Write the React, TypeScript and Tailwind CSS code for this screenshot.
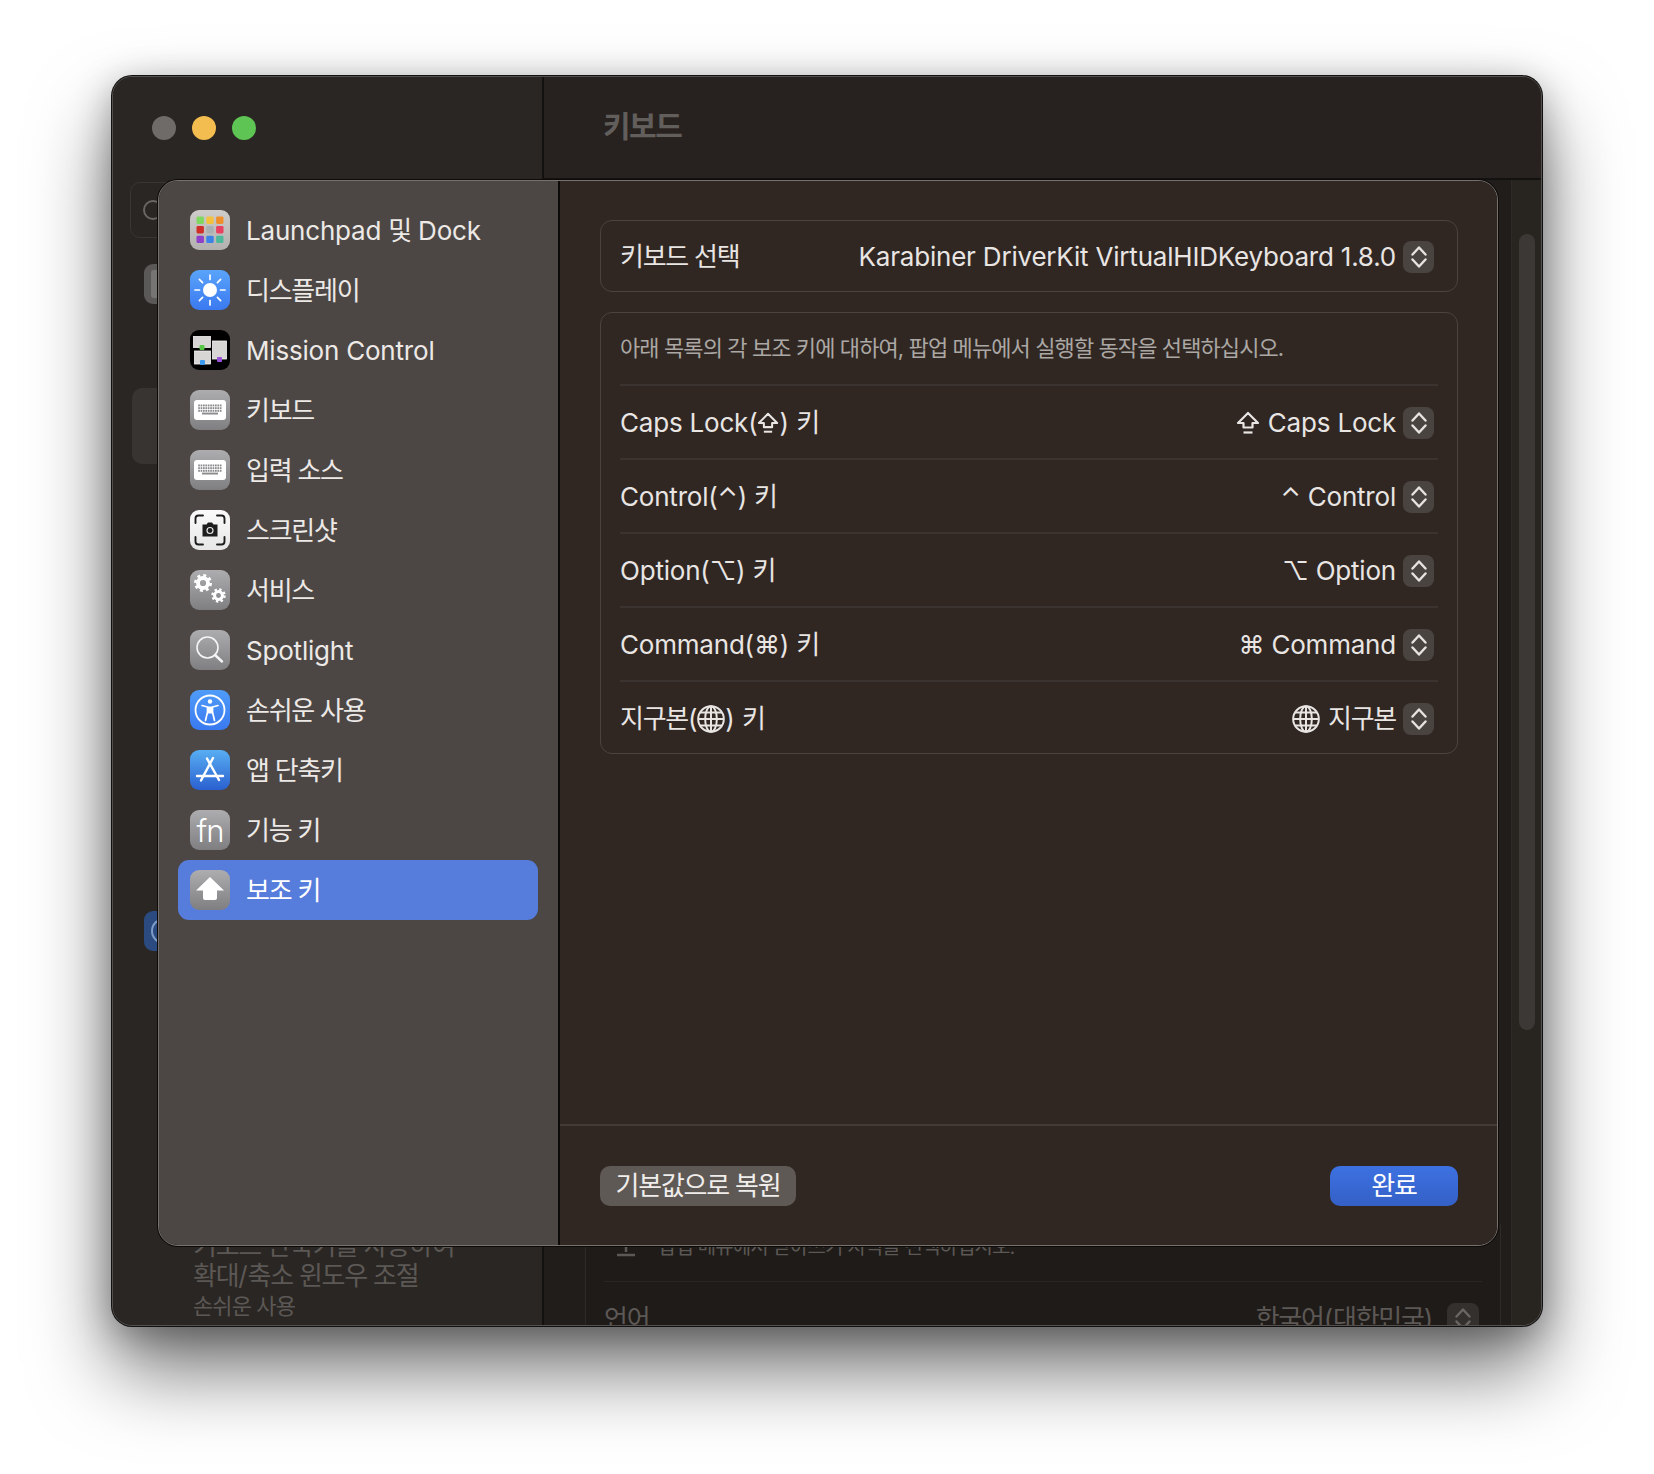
import React from "react";

function T({ children }: { children: string }) {
  const parts = children.split(/([\uAC00-\uD7A3]+(?:\s+[\uAC00-\uD7A3]+)*)/).filter(Boolean);
  return (
    <>
      {parts.map((p, i) =>
        /[\uAC00-\uD7A3]/.test(p) ? (
          <span key={i} className="tracking-[-1.25px]">{p}</span>
        ) : (
          <span key={i} className="tracking-[-0.2px]">{p}</span>
        )
      )}
    </>
  );
}

function Tile({ id, from, to, children, radius = 9 }: { id: string; from: string; to: string; children?: React.ReactNode; radius?: number }) {
  return (
    <svg width="40" height="40" viewBox="0 0 40 40" className="shrink-0">
      <defs>
        <linearGradient id={id} x1="0" y1="0" x2="0" y2="1">
          <stop offset="0" stopColor={from} />
          <stop offset="1" stopColor={to} />
        </linearGradient>
      </defs>
      <rect x="0" y="0" width="40" height="40" rx={radius} fill={`url(#${id})`} />
      {children}
    </svg>
  );
}

const GRAY: [string, string] = ["#adacae", "#7f7e81"];

function LaunchpadIcon() {
  const c = [
    ["#7fd860", "#f2c23e", "#ee8f2c"],
    ["#cf2f26", "#a9b0b2", "#e8405e"],
    ["#8f3fc8", "#3b82e8", "#4fb89a"],
  ];
  return (
    <Tile id="lp" from="#cfcdcb" to="#b3b1af">
      {c.map((r, y) =>
        r.map((f, x) => <rect key={`${x}${y}`} x={6.5 + x * 9.8} y={6.5 + y * 9.6} width="7.4" height="7.4" rx="1.4" fill={f} />)
      )}
    </Tile>
  );
}

function DisplayIcon() {
  const rays = [0, 45, 90, 135, 180, 225, 270, 315];
  return (
    <Tile id="dp" from="#5aa4fb" to="#3a79f0">
      <circle cx="20" cy="20" r="7" fill="#fff" />
      {rays.map((a) => (
        <line key={a} x1="20" y1="5" x2="20" y2="9.5" stroke="#fff" strokeWidth="1.7" strokeLinecap="round" transform={`rotate(${a} 20 20)`} />
      ))}
    </Tile>
  );
}

function MissionIcon() {
  return (
    <Tile id="mc" from="#000" to="#000">
      <rect x="3.5" y="6.5" width="17" height="11" fill="#d8d6d4" stroke="#f4f4f4" strokeWidth="0.8" />
      <rect x="4.5" y="21" width="16" height="13" fill="#d8d6d4" stroke="#f4f4f4" strokeWidth="0.8" />
      <rect x="22.5" y="11" width="14" height="18" fill="#d8d6d4" stroke="#f4f4f4" strokeWidth="0.8" />
      <rect x="9.5" y="15" width="5" height="5" rx="1" fill="#58c848" />
      <rect x="10" y="30" width="5" height="5" rx="1" fill="#3d9bf0" />
      <rect x="27" y="27" width="5" height="5" rx="1" fill="#9a50d8" />
    </Tile>
  );
}

function KeyboardIcon({ id }: { id: string }) {
  const dots: React.ReactNode[] = [];
  for (let y = 0; y < 3; y++)
    for (let x = 0; x < 10; x++)
      dots.push(<rect key={`${x}-${y}`} x={8.2 + x * 2.4} y={14.5 + y * 2.7} width="1.7" height="1.9" fill="#8c8b8d" />);
  return (
    <Tile id={id} from={GRAY[0]} to={GRAY[1]}>
      <rect x="4" y="10" width="32" height="20" rx="3" fill="#fff" />
      {dots}
      <rect x="12" y="22.600" width="16" height="1.900" fill="#8c8b8d" />
    </Tile>
  );
}

function ScreenshotIcon() {
  return (
    <Tile id="ss" from="#fbfbfb" to="#e6e6e6">
      <g fill="none" stroke="#1d1d1d" strokeWidth="1.9" strokeLinecap="round">
        <path d="M5.5 13V8.5a3 3 0 0 1 3-3H13" />
        <path d="M27 5.5h4.5a3 3 0 0 1 3 3V13" />
        <path d="M5.5 27v4.5a3 3 0 0 0 3 3H13" />
        <path d="M27 34.5h4.5a3 3 0 0 0 3-3V27" />
      </g>
      <path d="M12.500 14.500h4l1.500-2h4l1.500 2h4v12h-15z" fill="#1d1d1d" />
      <circle cx="20" cy="20.500" r="3.600" fill="#e8e8e8" />
      <circle cx="20" cy="20.500" r="2.400" fill="#1d1d1d" />
    </Tile>
  );
}

function Gear({ cx, cy, r, w }: { cx: number; cy: number; r: number; w: number }) {
  const c = 2 * Math.PI * r;
  return (
    <g>
      <circle cx={cx} cy={cy} r={r} fill="none" stroke="#fff" strokeWidth={w} strokeDasharray={`${c / 16} ${c / 16}`} />
      <circle cx={cx} cy={cy} r={r * 0.66} fill="none" stroke="#fff" strokeWidth={r * 0.5} />
    </g>
  );
}

function ServicesIcon() {
  return (
    <Tile id="sv" from={GRAY[0]} to={GRAY[1]}>
      <Gear cx={13} cy={13} r={7.600} w={2.800} />
      <Gear cx={28.500} cy={25.500} r={6} w={2.400} />
    </Tile>
  );
}

function SpotlightIcon() {
  return (
    <Tile id="sp" from={GRAY[0]} to={GRAY[1]}>
      <circle cx="17.500" cy="17.500" r="10.500" fill="none" stroke="#f5f5f5" strokeWidth="1.600" />
      <line x1="25" y1="25" x2="32" y2="31.500" stroke="#f5f5f5" strokeWidth="2.400" strokeLinecap="round" />
    </Tile>
  );
}

function AccessIcon() {
  return (
    <Tile id="ac" from="#4f9cf9" to="#3a79f0">
      <circle cx="20" cy="20" r="14.500" fill="none" stroke="#fff" strokeWidth="1.800" />
      <circle cx="20" cy="11.500" r="2.200" fill="#fff" />
      <path d="M12 15.500l5.500 1.500v5l-2 8.500M28 15.500l-5.500 1.500v5l2 8.500" fill="none" stroke="#fff" strokeWidth="1.700" strokeLinecap="round" strokeLinejoin="round" />
      <rect x="17.500" y="16.500" width="5" height="7" fill="#fff" />
    </Tile>
  );
}

function AppIcon() {
  return (
    <Tile id="ap" from="#58aef2" to="#2a60d0">
      <g stroke="#fff" strokeWidth="2.400" strokeLinecap="round" fill="none">
        <path d="M11 30.500L23 8" />
        <path d="M17 8.500L29 30" />
        <path d="M7 26h26" />
      </g>
    </Tile>
  );
}

function FnIcon() {
  return (
    <div className="relative h-10 w-10 shrink-0 rounded-[9px] bg-gradient-to-b from-[#adacae] to-[#7f7e81]">
      <span className="absolute inset-0 flex items-center justify-center text-[31px] font-light leading-none tracking-[-1px] text-white">fn</span>
    </div>
  );
}

function ModifierIcon() {
  return (
    <Tile id="md" from={GRAY[0]} to={GRAY[1]}>
      <path d="M20 7L34 20.500H27V28a2 2 0 0 1-2 2H15a2 2 0 0 1-2-2V20.500H6z" fill="#fff" />
    </Tile>
  );
}

function Stepper() {
  return (
    <span className="ml-[7px] flex h-[32px] w-[31px] shrink-0 items-center justify-center rounded-[8px] bg-[#4a4441]">
      <svg width="16" height="24" viewBox="0 0 16 24" fill="none" stroke="#e6e3e1" strokeWidth="2.400" strokeLinecap="round" strokeLinejoin="round">
        <path d="M1.500 9.500L8 2.500l6.500 7" />
        <path d="M1.500 14.500l6.500 7 6.500-7" />
      </svg>
    </span>
  );
}

function Globe({ size }: { size: number }) {
  return (
    <svg width={size} height={size} viewBox="0 0 24 24" fill="none" stroke="#e8e5e3" strokeWidth="1.700" className="shrink-0">
      <circle cx="12" cy="12" r="11" fill="#302723" />
      <ellipse cx="12" cy="12" rx="5" ry="11" />
      <path d="M12 1v22M1 12h22M2.500 6.500h19M2.500 17.500h19" />
    </svg>
  );
}

function Caps({ size }: { size: number }) {
  return (
    <svg width={size} height={size} viewBox="0 0 24 24" fill="none" stroke="#e8e5e3" strokeWidth="2.200" strokeLinejoin="round" className="shrink-0">
      <path d="M12 2L22 12h-5.500v4.500h-9V12H2z" />
      <path d="M7.500 21.500h9" />
    </svg>
  );
}

const sideItems: { label: string; icon: React.ReactNode; active?: boolean }[] = [
  { label: "Launchpad 및 Dock", icon: <LaunchpadIcon /> },
  { label: "디스플레이", icon: <DisplayIcon /> },
  { label: "Mission Control", icon: <MissionIcon /> },
  { label: "키보드", icon: <KeyboardIcon id="kb1" /> },
  { label: "입력 소스", icon: <KeyboardIcon id="kb2" /> },
  { label: "스크린샷", icon: <ScreenshotIcon /> },
  { label: "서비스", icon: <ServicesIcon /> },
  { label: "Spotlight", icon: <SpotlightIcon /> },
  { label: "손쉬운 사용", icon: <AccessIcon /> },
  { label: "앱 단축키", icon: <AppIcon /> },
  { label: "기능 키", icon: <FnIcon /> },
  { label: "보조 키", icon: <ModifierIcon />, active: true },
];

const rows: { label: React.ReactNode; value: React.ReactNode }[] = [
  {
    label: <><T>Caps Lock(</T><span className="inline-block align-[-4px]"><Caps size={22} /></span>) <T>키</T></>,
    value: <><span className="mr-[8px]"><Caps size={24} /></span><T>Caps Lock</T></>,
  },
  { label: <T>Control(⌃) 키</T>, value: <T>⌃ Control</T> },
  { label: <T>Option(⌥) 키</T>, value: <T>⌥ Option</T> },
  { label: <T>Command(⌘) 키</T>, value: <T>⌘ Command</T> },
  {
    label: <><T>지구본(</T><span className="inline-block align-[-6px]"><Globe size={28} /></span>) <T>키</T></>,
    value: <><span className="mr-[8px]"><Globe size={28} /></span><T>지구본</T></>,
  },
];

export default function App() {
  return (
    <div className="h-[1474px] w-[1654px] overflow-hidden bg-white pl-[112px] pt-[76px] text-[26px] leading-[32px] text-[#e8e5e3] [font-family:Inter,'Noto_Sans_CJK_KR','DejaVu_Sans',sans-serif]">
      <div className="relative flex h-[1250px] w-[1430px] overflow-hidden rounded-[20px] border border-[#55504d] bg-[#2a2623] shadow-[0_0_0_1px_#111,0_44px_80px_rgba(0,0,0,0.55),0_8px_36px_rgba(0,0,0,0.3)]">
        {/* dimmed main window: sidebar */}
        <div className="flex w-[431px] shrink-0 flex-col border-r-2 border-[#141210] bg-[#2a2623] px-[20px] pb-[4px] pt-[39px] text-[#5c5855]">
          <div className="ml-[19px] flex h-[24px] items-center gap-[16px]">
            <span className="h-[24px] w-[24px] rounded-full bg-[#6f6b68]" />
            <span className="h-[24px] w-[24px] rounded-full bg-[#f4bd4f]" />
            <span className="h-[24px] w-[24px] rounded-full bg-[#5ec454]" />
          </div>
          <div className="ml-[-3px] mt-[42px] flex h-[56px] items-center rounded-[10px] border border-[#3a3633] pl-[12px]">
            <span className="h-[20px] w-[20px] rounded-full border-2 border-[#6a6663]" />
          </div>
          <div className="ml-[11px] mt-[26px] flex h-[40px] w-[40px] items-center justify-center rounded-[9px] bg-[#5b5957]">
            <span className="h-[28px] w-[26px] rounded-[3px] bg-[#777573]" />
          </div>
          <div className="ml-[-1px] mt-[84px] h-[76px] rounded-[10px] bg-[#383431]" />
          <div className="ml-[11px] mt-[447px] flex h-[40px] w-[40px] items-center justify-center rounded-[9px] bg-[#2a4a80]">
            <span className="h-[26px] w-[26px] rounded-full border-2 border-[#7f9cc6]" />
          </div>
          <div className="mt-auto pl-[60px] text-[26px] leading-[30px]">
            <div><T>키보드 단축키를 사용하여</T></div>
            <div><T>확대/축소 윈도우 조절</T></div>
            <div className="text-[22px] tracking-[-0.9px]">손쉬운 사용</div>
          </div>
        </div>

        {/* dimmed main window: content */}
        <div className="flex min-w-0 flex-1 flex-col">
          <div className="flex h-[103px] shrink-0 items-center border-b-2 border-[#141210] bg-[#27221f] pb-[3px] pl-[59px] text-[30px] font-semibold tracking-[-1.5px] text-[#625e5b]">
            키보드
          </div>
          <div className="flex min-h-0 flex-1">
            <div className="flex min-w-0 flex-1 flex-col justify-end bg-[#211d1a] pl-[41px] pr-[10px]">
              <div className="-mb-[10px] border-x border-[#2e2a27] bg-[#1f1b18] px-[18px] text-[#5c5855]">
                <div className="flex h-[58px] items-start gap-[20px] border-b border-[#2a2623] pl-[10px] text-[20px] leading-[32px] tracking-[-0.9px]">
                  <svg width="24" height="34" viewBox="0 0 24 34" fill="none" stroke="#5c5855" strokeWidth="2.500" className="shrink-0">
                    <path d="M3 10a9 9 0 0 0 18 0M12 19v9M3 31h18" />
                  </svg>
                  <span className="mt-[7px]">팝업 메뉴에서 받아쓰기 지역을 선택하십시오.</span>
                </div>
                <div className="flex items-center justify-between pr-[3px] pt-[21px]">
                  <span><T>언어</T></span>
                  <span className="flex items-center">
                    <T>한국어(대한민국)</T>
                    <span className="ml-[14px] flex h-[32px] w-[32px] items-center justify-center rounded-[8px] bg-[#33302d]">
                      <svg width="16" height="24" viewBox="0 0 16 24" fill="none" stroke="#6a6663" strokeWidth="2.400" strokeLinecap="round" strokeLinejoin="round">
                        <path d="M1.500 9.500L8 2.500l6.500 7" />
                        <path d="M1.500 14.500l6.500 7 6.500-7" />
                      </svg>
                    </span>
                  </span>
                </div>
              </div>
            </div>
            <div className="w-[30px] shrink-0 border-l border-[#2e2a27] bg-[#282420] px-[7px] pt-[54px]">
              <div className="h-[796px] w-[16px] rounded-full bg-[#3b3835]" />
            </div>
          </div>
        </div>

        {/* sheet */}
        <div className="absolute left-[45px] top-[103px] flex h-[1066px] w-[1340px] overflow-hidden rounded-[20px] border border-[#77716d] shadow-[0_0_0_1px_#0c0b0a]">
          <div className="w-[401px] shrink-0 border-r-2 border-[#0c0b0a] bg-[#4c4744] pl-[19px] pr-[20px] pt-[19px]">
            {sideItems.map((it) => (
              <div key={it.label} className={`flex h-[60px] items-center gap-[16px] rounded-[11px] pl-[12px] ${it.active ? "bg-[#567cdc] text-white" : "text-[#ece9e7]"}`}>
                {it.icon}
                <span className="pt-[2px]"><T>{it.label}</T></span>
              </div>
            ))}
          </div>
          <div className="flex min-w-0 flex-1 flex-col bg-[#302723]">
            <div className="flex-1 pl-[40px] pr-[39px] pt-[39px]">
              <div className="flex h-[72px] items-center justify-between rounded-[12px] border border-[#4a4340] pl-[19px] pr-[23px] pt-[2px]">
                <span><T>키보드 선택</T></span>
                <span className="flex items-center">
                  <T>Karabiner DriverKit VirtualHIDKeyboard 1.8.0</T>
                  <Stepper />
                </span>
              </div>
              <div className="mt-[20px] h-[442px] rounded-[12px] border border-[#4a4340] px-[19px]">
                <div className="flex h-[71px] items-center pb-[2px] text-[22px] tracking-[-0.9px] text-[#aba7a4]">
                  아래 목록의 각 보조 키에 대하여, 팝업 메뉴에서 실행할 동작을 선택하십시오.
                </div>
                {rows.map((r, i) => (
                  <div key={i} className="flex h-[74px] items-center justify-between border-t-2 border-[#3b3330] pr-[4px] pt-[2px]">
                    <span className="flex items-center whitespace-pre">{r.label}</span>
                    <span className="flex items-center">
                      <span className="flex items-center whitespace-pre">{r.value}</span>
                      <Stepper />
                    </span>
                  </div>
                ))}
              </div>
            </div>
            <div className="flex h-[121px] items-center justify-between border-t-2 border-[#433b38] pl-[40px] pr-[39px] pt-[1px]">
              <span className="flex h-[40px] w-[196px] items-center justify-center rounded-[10px] bg-[#5f5955] text-[#f0eeec]"><T>기본값으로 복원</T></span>
              <span className="flex h-[40px] w-[128px] items-center justify-center rounded-[10px] bg-gradient-to-b from-[#3d71e2] to-[#3460c6] text-white"><T>완료</T></span>
            </div>
          </div>
        </div>
      </div>
    </div>
  );
}
